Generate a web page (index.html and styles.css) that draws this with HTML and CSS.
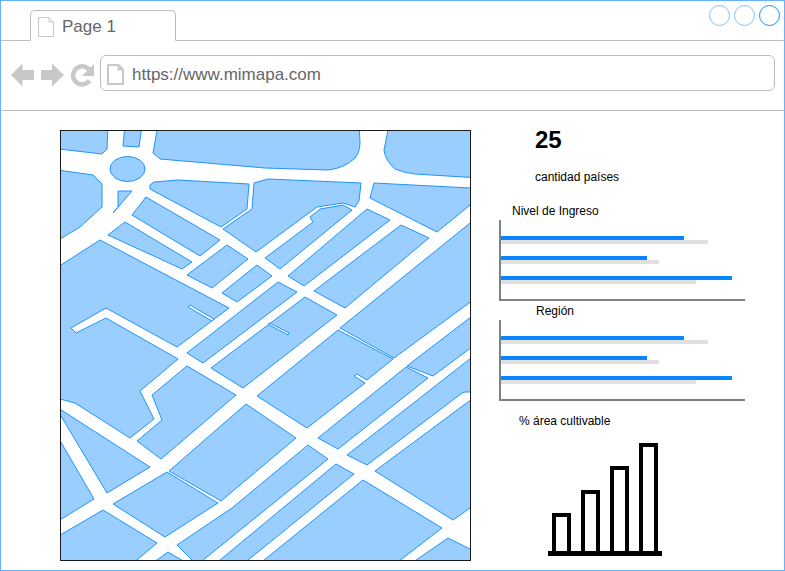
FILE: index.html
```html
<!DOCTYPE html>
<html lang="es">
<head>
  <meta charset="UTF-8" />
  <title>Mi Mapa</title>
  <link rel="stylesheet" href="styles.css">
</head>
<body>
  <div class="window">
    <header class="tabbar">
      <div class="tab">
        <svg class="tab-icon" width="16" height="20" viewBox="0 0 16 20">
          <path d="M0.5 0.5H11L15.5 5V19.5H0.5Z M11 0.5V5H15.5" />
        </svg>
        <span>Page 1</span>
      </div>
      <div class="win-buttons">
        <span class="win-btn"></span>
        <span class="win-btn"></span>
        <span class="win-btn active"></span>
      </div>
    </header>

    <nav class="toolbar">
      <svg class="nav-icons" width="84" height="24" viewBox="11 63 84 24">
        <path d="M11 75L22.5 63.5V70H34V80H22.5V86.500Z" />
        <path d="M64 75L52 63.500V70H41V80H52V86.500Z" />
        <path d="M89.500 80.500A9 9 0 1 1 87 67.800L90 70.500" class="reload-arc" />
        <path d="M94 64V76H82Z" />
      </svg>
      <div class="address">
        <svg class="address-icon" width="17" height="21" viewBox="0 0 17 21">
          <path d="M1 1H11.500L16 5.500V20H1Z M11.500 1V5.500H16" />
        </svg>
        <span>https://www.mimapa.com</span>
      </div>
    </nav>

    <main class="content">
      <div class="map">
        <svg width="409" height="429" viewBox="61 131 409 429">
          <polygon points="50,125 108,125 107,149 102,154 50,148" />
          <polygon points="125,125 142,125 139,147 123,146" />
          <path d="M158,125L153,153L160,159L265,168L328,170Q345,168 355,158Q360,152 360,142L359,125Z" />
          <path d="M389,125L384,150Q385,160 395,169Q405,173 415,174L480,178V125Z" />
          <ellipse cx="127.500" cy="169" rx="17.500" ry="12.500" />
          <polygon points="50,169 93,175 102,184 102,207 80,227 50,245" />
          <polygon points="118,191 132,191 113,213 118,207" />
          <polygon points="150,189 150,185 154,182 178,180 249,184 247,209 221,227" />
          <polygon points="146,197 220,240 200,256 132,215" />
          <polygon points="125,222 192,262 182,269 108,235" />
          <polygon points="223,229 252,209 254,183 268,179 361,183 359,201 355,207 343,203 317,207 256,252" />
          <polygon points="265,258 313,222 310,217 320,209 343,205 352,210 280,269" />
          <polygon points="227,245 248,259 212,288 187,275" />
          <polygon points="257,265 272,276 237,302 222,293" />
          <polygon points="367,209 390,220 304,286 288,276" />
          <polygon points="401,225 429,238 345,308 314,291" />
          <polygon points="374,183 480,188.500 480,197 437,232 370,198" />
          <polygon points="278,282 297,292 203,363 187,353" />
          <polygon points="305,297 337,315 243,388 211,368" />
          <polygon points="50,272 100,240 229,308 177,347 106,308 71,328 76,333 106,318 178,359 140,391 154,419 130,438 75,403 60,399 50,399" />
          <polygon points="187,366 236,395 161,459 137,441 162,420 152,395" />
          <polygon points="55,406 150,467 107,493" />
          <polygon points="55,432 94,499 55,523" />
          <polygon points="103,510 157,543 131,565 50,565 50,541" />
          <polygon points="167,472 218,503 165,537 113,504" />
          <polygon points="169,471 246,404 296,438 221,501" />
          <polygon points="177,545 232,508 308,445 328,459 197,565" />
          <polygon points="168,552 190,565 150,565" />
          <polygon points="336,464 354,474 242,565 214,565" />
          <polygon points="363,480 442,528 394,565 258,565" />
          <polygon points="448,538 480,554 480,565 409,565" />
          <polygon points="375,471 480,393 480,501 453,520" />
          <polygon points="347,455 480,351 480,392 465,392 462,393 367,465" />
          <polygon points="318,438 406,367 428,378 338,449" />
          <polygon points="407,366 480,310 480,341 433,376" />
          <polygon points="338,330 393,359 367,380 357,374 354,376 365,383 307,428 257,396" />
          <polygon points="340,328 480,215 480,295 394,358" />
          <polygon class="slit" points="188,307 190,305 214,319 212,321" />
          <polygon class="slit" points="268,324 270,323 289,333 288,335" />
        </svg>
      </div>

      <aside class="panel">
        <div class="count">25</div>
        <div class="count-label">cantidad países</div>

        <div class="chart-title income">Nivel de Ingreso</div>
        <div class="hbar-chart">
          <div class="hbar-group">
            <div class="hbar main" style="width: 183px"></div>
            <div class="hbar ref" style="width: 207px"></div>
          </div>
          <div class="hbar-group">
            <div class="hbar main" style="width: 146px"></div>
            <div class="hbar ref" style="width: 158px"></div>
          </div>
          <div class="hbar-group">
            <div class="hbar main" style="width: 231px"></div>
            <div class="hbar ref" style="width: 195px"></div>
          </div>
        </div>

        <div class="chart-title region">Región</div>
        <div class="hbar-chart">
          <div class="hbar-group">
            <div class="hbar main" style="width: 183px"></div>
            <div class="hbar ref" style="width: 207px"></div>
          </div>
          <div class="hbar-group">
            <div class="hbar main" style="width: 146px"></div>
            <div class="hbar ref" style="width: 158px"></div>
          </div>
          <div class="hbar-group">
            <div class="hbar main" style="width: 231px"></div>
            <div class="hbar ref" style="width: 195px"></div>
          </div>
        </div>

        <div class="chart-title area">% área cultivable</div>
        <div class="columns">
          <div class="column" style="height: 38px"></div>
          <div class="column" style="height: 61px"></div>
          <div class="column" style="height: 85px"></div>
          <div class="column" style="height: 108px"></div>
        </div>
      </aside>
    </main>
  </div>
</body>
</html>
```

FILE: styles.css
```css
* {
  box-sizing: border-box;
  margin: 0;
  padding: 0;
}

body {
  font-family: 'Liberation Sans', Arial, sans-serif;
  background-color: #fff;
  color: #000;
}

.window {
  width: 785px;
  height: 571px;
  border: 1px solid #66b2ff;
  overflow: hidden;
}

/* Browser chrome */
.tabbar {
  height: 40px;
  padding: 9px 4px 0 29px;
  border-bottom: 1px solid #bdbdbd;
  display: flex;
  justify-content: space-between;
  align-items: flex-start;
}

.tab {
  width: 146px;
  height: 31px;
  padding: 6px 0 0 7px;
  border: 1px solid #bdbdbd;
  border-bottom: 1px solid #fff;
  border-radius: 5px 5px 0 0;
  background-color: #fff;
  color: #666;
  font-size: 17px;
  display: flex;
  align-items: flex-start;
  gap: 8px;
}

.tab-icon path {
  fill: #fff;
  stroke: #c8c8c8;
  stroke-width: 1;
}

.tab span {
  line-height: 20px;
}

.win-buttons {
  margin-top: -5px;
  display: flex;
  gap: 4px;
}

.win-btn {
  width: 21px;
  height: 21px;
  border: 1.5px solid #80bfff;
  border-radius: 50%;
}

.win-btn.active {
  border-color: #1a90ff;
}

.toolbar {
  height: 70px;
  padding: 14px 9px 0 10px;
  border-bottom: 1px solid #bdbdbd;
  display: flex;
  align-items: flex-start;
}

.nav-icons {
  margin: 8px 5px 0 0;
  flex-shrink: 0;
}

.nav-icons path {
  fill: #c8c8c8;
}

.nav-icons .reload-arc {
  fill: none;
  stroke: #c8c8c8;
  stroke-width: 4.500;
}

.address {
  flex: 1;
  height: 36px;
  padding: 8px 0 0 6px;
  border: 1px solid #bdbdbd;
  border-radius: 6px;
  color: #666;
  font-size: 17px;
  display: flex;
  align-items: flex-start;
  gap: 8px;
}

.address span {
  line-height: 21px;
}

.address-icon path {
  fill: #fff;
  stroke: #c8c8c8;
  stroke-width: 2;
}

/* Page content */
.content {
  display: flex;
  align-items: flex-start;
}

.map {
  width: 411px;
  height: 431px;
  margin: 19px 28px 0 59px;
  border: 1px solid #1a1a1a;
  flex-shrink: 0;
}

.map svg {
  display: block;
}

.map polygon,
.map path,
.map ellipse {
  fill: #99ceff;
  stroke: #1f93ff;
  stroke-width: 1;
}

.map .slit {
  fill: #fff;
}

.panel {
  width: 246px;
  padding-top: 15px;
}

.count {
  padding-left: 36px;
  font-size: 24px;
  font-weight: bold;
  line-height: 28px;
}

.count-label {
  margin-top: 16px;
  padding-left: 36px;
  font-size: 12px;
  line-height: 14px;
}

.chart-title {
  font-size: 12px;
  line-height: 14px;
}

.chart-title.income {
  margin-top: 20px;
  padding-left: 13px;
}

.chart-title.region {
  margin-top: 3px;
  padding-left: 37px;
}

.chart-title.area {
  margin-top: 13px;
  padding-left: 20px;
}

.hbar-chart {
  height: 81px;
  margin-top: 2px;
  padding-top: 16px;
  border-left: 2px solid #808080;
  border-bottom: 2px solid #808080;
  display: flex;
  flex-direction: column;
  gap: 12px;
}

.hbar {
  height: 4px;
}

.hbar.main {
  background-color: #0a84ff;
}

.hbar.ref {
  background-color: #e0e0e0;
}

.columns {
  width: 114px;
  height: 113px;
  margin: 15px 0 0 49px;
  padding-left: 4px;
  border-bottom: 5px solid #000;
  display: flex;
  align-items: flex-end;
  gap: 10px;
}

.column {
  width: 19px;
  border: 4px solid #000;
  border-bottom: none;
}
```
